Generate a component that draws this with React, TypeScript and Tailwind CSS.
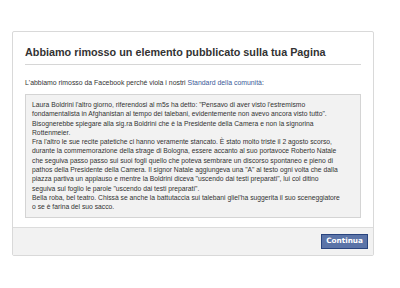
const lines = [
  "Laura Boldrini l'altro giorno, riferendosi al m5s ha detto: \"Pensavo di aver visto l'estremismo",
  "fondamentalista in Afghanistan al tempo dei talebani, evidentemente non avevo ancora visto tutto\".",
  "Bisognerebbe spiegare alla sig.ra Boldrini che è la Presidente della Camera e non la signorina",
  "Rottenmeier.",
  "Fra l'altro le sue recite patetiche ci hanno veramente stancato. È stato molto triste il 2 agosto scorso,",
  "durante la commemorazione della strage di Bologna, essere accanto al suo portavoce Roberto Natale",
  "che seguiva passo passo sui suoi fogli quello che poteva sembrare un discorso spontaneo e pieno di",
  "pathos della Presidente della Camera. Il signor Natale aggiungeva una \"A\" al testo ogni volta che dalla",
  "piazza partiva un applauso e mentre la Boldrini diceva \"uscendo dai testi preparati\", lui col ditino",
  "seguiva sul foglio le parole \"uscendo dai testi preparati\".",
  "Bella roba, bel teatro. Chissà se anche la battutaccia sui talebani gliel'ha suggerita il suo sceneggiatore",
  "o se è farina del suo sacco.",
];

export default function App() {
  return (
    <div className="w-[400px] h-[288px] bg-white pt-[31px] pl-[12px]" style={{ fontFamily: "'Liberation Sans', Arial, sans-serif" }}>
      <div className="w-[362px] h-[225px] border border-[#d9d9d9] rounded-[2px] bg-white flex flex-col">
        {/* Header */}
        <div className="px-[12px] pt-[14px]">
          <h1 className="text-[10.8px] leading-[13px] font-bold text-[#333] border-b border-[#d6d6d6] pb-[5px]">
            Abbiamo rimosso un elemento pubblicato sulla tua Pagina
          </h1>
          <p className="text-[6.9px] leading-[9px] text-[#333] mt-[13px]">
            L'abbiamo rimosso da Facebook perché viola i nostri{" "}
            <span className="text-[#3b5998]">Standard della comunità</span>:
          </p>
          <div className="mt-[7px] h-[124px] bg-[#f2f2f2] border border-[#d4d4d4] px-[6px] pt-[5px] text-[6.75px] leading-[9.3px] text-[#333]">
            {lines.map((l, i) => (
              <div key={i} className="whitespace-nowrap">{l}</div>
            ))}
          </div>
        </div>
        {/* Footer */}
        <div className="mt-auto h-[28px] bg-[#f2f2f2] border-t border-[#dcdcdc] flex items-center justify-end pr-[5px]">
          <button className="h-[15px] px-[4px] bg-[#5b74a8] border border-[#29447e] text-white text-[7.3px] font-bold" style={{ fontFamily: "'DejaVu Sans', sans-serif" }}>
            Continua
          </button>
        </div>
      </div>
    </div>
  );
}
